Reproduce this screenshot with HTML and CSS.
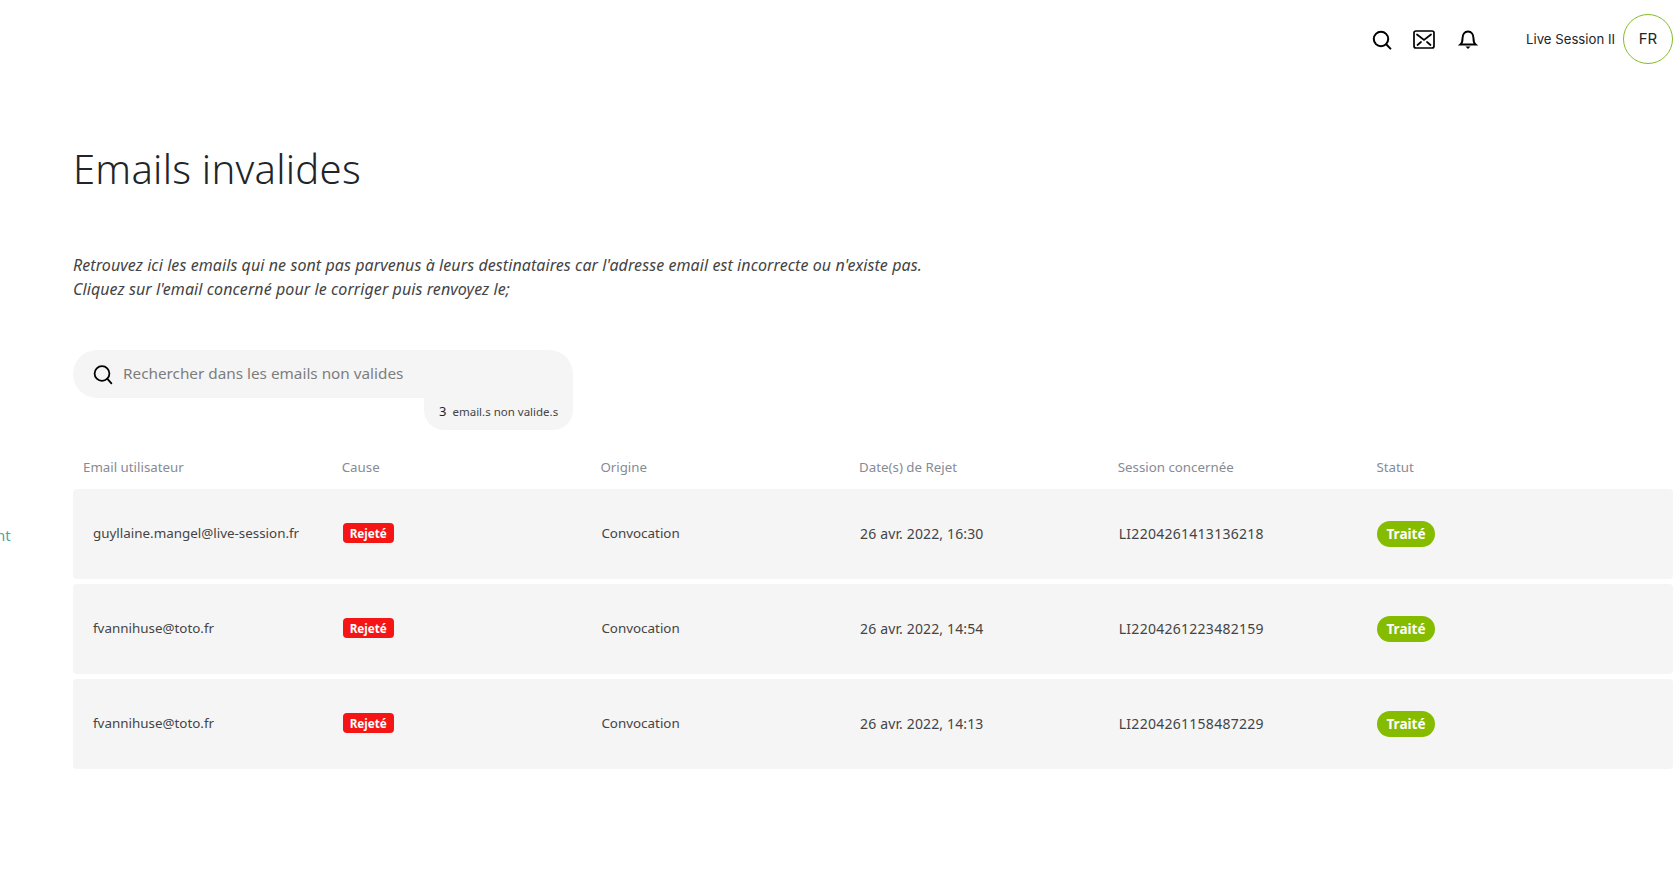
FILE: index.html
```html
<!DOCTYPE html>
<html lang="fr">
<head>
<meta charset="utf-8">
<title>Emails invalides</title>
<link rel="stylesheet" href="styles.css">
</head>
<body>
<div class="page">
  <header class="topbar">
    <svg class="icon icon-search" viewBox="0 0 20 20"><circle cx="9" cy="9" r="7.2"/><path d="M14.2 14.2 18.4 18.6"/></svg>
    <svg class="icon icon-mail" viewBox="0 0 22 19"><rect x="1" y="1" width="20" height="17" rx="2"/><path d="M4 4.500 11 10 18 4.500M4.500 15 8 12M17.500 15 14 12"/></svg>
    <svg class="icon icon-bell" viewBox="0 0 20 20"><path d="M2.500 15.500H17.500C15.800 14 15.500 12.500 15.500 9.500 15.500 5.500 13.500 2.500 10 2.500S4.500 5.500 4.500 9.500C4.500 12.500 4.200 14 2.500 15.500Z"/><path class="fill" d="M7.500 17.500H12.500L10 20Z"/></svg>
    <span class="user-name">Live Session II</span>
    <span class="avatar">FR</span>
  </header>
  <div class="body-row">
    <aside class="side"><span class="side-text">nt</span></aside>
    <main class="content">
      <h1 class="title">Emails invalides</h1>
      <p class="intro">Retrouvez ici les emails qui ne sont pas parvenus à leurs destinataires car l'adresse email est incorrecte ou n'existe pas.<br>Cliquez sur l'email concerné pour le corriger puis renvoyez le;</p>
      <div class="search">
        <div class="search-box">
          <svg class="search-icon" viewBox="0 0 20 20"><circle cx="9" cy="9" r="7.400"/><path d="M14.200 14.200 18.400 18.800"/></svg>
          <span class="placeholder">Rechercher dans les emails non valides</span>
        </div>
        <div class="search-count"><b>3</b><span>email.s non valide.s</span></div>
      </div>
      <div class="table">
        <div class="head">
          <span>Email utilisateur</span><span>Cause</span><span>Origine</span><span>Date(s) de Rejet</span><span>Session concernée</span><span>Statut</span>
        </div>
        <div class="row">
          <span class="first">guyllaine.mangel@live-session.fr</span><span><em class="tag">Rejeté</em></span><span>Convocation</span><span class="date">26 avr. 2022, 16:30</span><span class="ref">LI2204261413136218</span><span><em class="pill">Traité</em></span>
        </div>
        <div class="row">
          <span class="first">fvannihuse@toto.fr</span><span><em class="tag">Rejeté</em></span><span>Convocation</span><span class="date">26 avr. 2022, 14:54</span><span class="ref">LI2204261223482159</span><span><em class="pill">Traité</em></span>
        </div>
        <div class="row">
          <span class="first">fvannihuse@toto.fr</span><span><em class="tag">Rejeté</em></span><span>Convocation</span><span class="date">26 avr. 2022, 14:13</span><span class="ref">LI2204261158487229</span><span><em class="pill">Traité</em></span>
        </div>
      </div>
    </main>
  </div>
</div>
</body>
</html>
```
FILE: styles.css
```css
* { box-sizing: border-box; }
html, body { margin: 0; padding: 0; background: #fff; }
body { font-family: "Noto Sans", "Open Sans", sans-serif; color: #212529; overflow: hidden; }
.page { width: 1680px; height: 877px; overflow: hidden; }
.topbar { height: 80px; padding: 14px 7px 0 0; display: flex; align-items: flex-start; justify-content: flex-end; }
.icon { fill: none; stroke: #000; stroke-width: 2; stroke-linecap: round; margin-top: 16px; }
.icon-search { width: 20px; height: 20px; margin-right: 21px; }
.icon-mail { width: 22px; height: 19px; margin-right: 23px; margin-top: 16px; stroke-width: 1.700; }
.icon-bell { width: 20px; height: 20px; margin-right: 48px; margin-top: 15px; }
.icon-bell .fill { fill: #000; stroke: none; }
.user-name { font-family: "Inter", sans-serif; font-size: 13.200px; line-height: 17px; margin-top: 17px; margin-right: 8px; color: #212529; }
.avatar { width: 50px; height: 50px; border-radius: 50%; border: 1px solid #86bc25; display: flex; align-items: center; justify-content: center; font-family: "Inter", sans-serif; font-size: 15px; padding-bottom: 1px; }
.body-row { display: flex; }
.side { width: 73px; flex: none; padding-top: 445px; }
.side-text { display: block; margin-left: -4px; width: 15px; font-size: 15px; line-height: 20px; color: #4aa99f; }
.content { width: 1600px; flex: none; padding-top: 65px; }
.title { margin: 0; font-size: 40px; font-weight: 300; letter-spacing: .25px; line-height: 48px; color: #212529; }
.intro { margin: 60px 0 0; font-size: 16px; letter-spacing: .08px; line-height: 24px; font-style: italic; color: #444; }
.search { width: 500px; margin-top: 49px; display: flex; flex-direction: column; align-items: flex-end; }
.search-box { width: 500px; height: 48px; background: #f5f5f5; border-radius: 24px 24px 24px 24px; border-bottom-right-radius: 0; display: flex; align-items: center; padding-left: 20px; }
.search-icon { width: 20px; height: 21px; fill: none; stroke: #000; stroke-width: 1.800; stroke-linecap: round; margin-right: 10px; }
.placeholder { font-size: 15.300px; color: #7d7d7d; padding-bottom: 3px; }
.search-count { width: 149px; height: 32px; background: #f5f5f5; border-radius: 0 0 20px 20px; display: flex; align-items: center; padding: 0 0 6px 15px; font-size: 11.500px; color: #444; }
.search-count b { font-weight: 400; font-size: 13px; margin-right: 6px; color: #212529; }
.table { margin-top: 26px; }
.head { display: grid; grid-template-columns: repeat(6, 258.700px); padding-left: 10px; padding-top: 1px; height: 33px; font-size: 13.300px; line-height: 20px; color: #868b96; }
.row { display: grid; grid-template-columns: repeat(6, 258.700px); align-items: center; height: 90px; margin-bottom: 5px; padding-left: 11px; padding-bottom: 2px; background: #f5f5f5; border-radius: 4px; font-size: 13.400px; color: #444; }
.first { margin-left: 9px; }
.date { font-size: 14px; letter-spacing: .14px; }
.ref { font-size: 14px; letter-spacing: .27px; }
.tag { display: inline-block; font-style: normal; font-weight: 700; font-size: 11.700px; line-height: 20px; height: 20px; padding: 0 7px; color: #fff; background: #f51515; border-radius: 4px; vertical-align: middle; }
.pill { display: inline-block; font-style: normal; font-weight: 700; font-size: 13.600px; line-height: 26px; height: 26px; margin-top: 1px; padding: 0 9px; color: #fff; background: #85bc00; border-radius: 13px; vertical-align: middle; }
```
